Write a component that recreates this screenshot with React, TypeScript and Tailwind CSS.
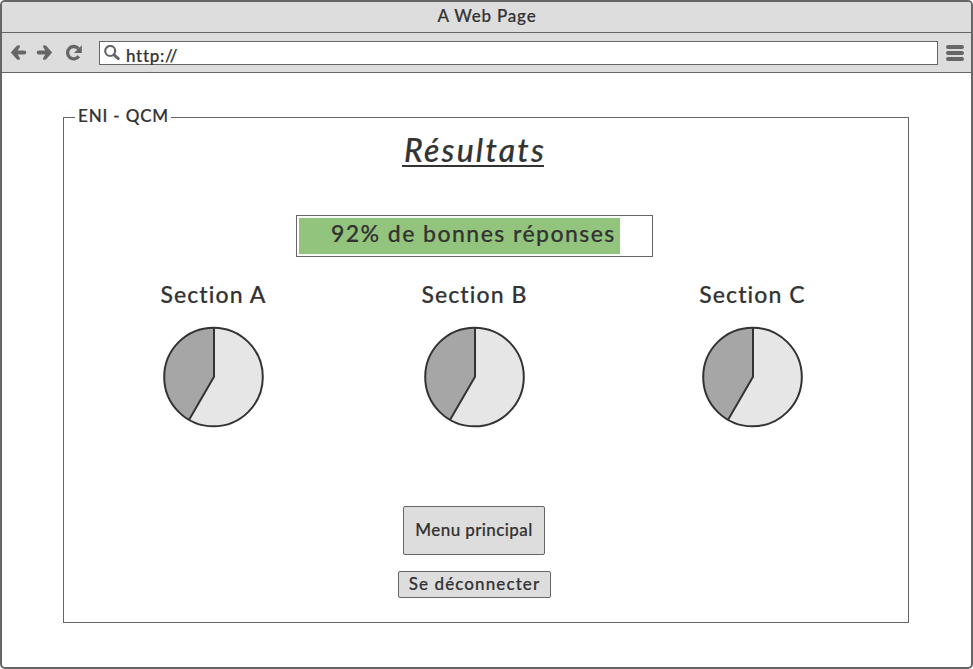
import React from "react";

function Pie() {
  return (
    <svg className="block" width="102" height="102" viewBox="0 0 102 102">
      <circle cx="51.5" cy="51" r="49.3" fill="#e6e6e6" />
      <path d="M51.5 51V1.7A49.3 49.3 0 0 0 27.1 93.8Z" fill="#a6a6a6" />
      <circle cx="51.5" cy="51" r="49.3" fill="none" stroke="#333" strokeWidth="2" />
      <path d="M52 1.7V50.8L27.1 93.8" fill="none" stroke="#333" strokeWidth="2" />
    </svg>
  );
}

function Section({ label, className }: { label: string; className: string }) {
  return (
    <section className={`flex w-[130px] flex-col items-center ${className}`}>
      <h2 className="h-[30px] whitespace-nowrap pl-[1px] text-[23px] leading-[28px] tracking-[1.1px]">{label}</h2>
      <div className="mt-[16px]"><Pie /></div>
    </section>
  );
}

function Arrow({ className = "" }: { className?: string }) {
  return (
    <svg className={className} width="17" height="17" viewBox="0 0 17 17">
      <path d="M.8 8.5L6.6 2Q7.7 .9 9.2 1.2Q10.3 1.6 9.9 3L7.7 6.4H14.2Q16.3 6.4 16.3 8.5Q16.3 10.6 14.2 10.6H7.7L9.9 14Q10.3 15.4 9.2 15.8Q7.7 16.1 6.6 15Z" fill="#666" />
    </svg>
  );
}

export default function App() {
  return (
    <div className="flex h-[669px] w-[973px] flex-col overflow-hidden rounded-[5px] border-2 border-[#666] bg-white font-['Lato',sans-serif] font-medium text-[#333] [-webkit-text-stroke:0.2px_#333]">
      <header className="h-[31px] border-b border-[#666] bg-[#ddd] pl-[1px] text-center text-[17px] leading-[27px] tracking-[0.8px]">
        A Web Page
      </header>
      <nav className="flex h-[40px] items-start border-b border-[#666] bg-[#ddd] pl-[8px] pt-[8px]">
        <Arrow className="mt-[3px]" />
        <Arrow className="ml-[9px] mt-[3px] rotate-180" />
        <svg className="ml-[12px] mt-[3px]" width="18" height="17" viewBox="0 0 18 17">
          <path d="M13.4 4.6A6.2 6.2 0 1 0 13.8 12.3" fill="none" stroke="#666" strokeWidth="3.3" />
          <path d="M16.8 1.3V8.9H9Z" fill="#666" />
        </svg>
        <div className="ml-[16px] flex h-[24px] w-[839px] border border-[#666] bg-white">
          <svg className="ml-[4px] mt-[3px]" width="17" height="17" viewBox="0 0 17 17" fill="none" stroke="#666">
            <circle cx="6.2" cy="6" r="5" strokeWidth="2.2" />
            <path d="M10 9.8L14.3 13.6" strokeWidth="3" strokeLinecap="round" />
          </svg>
          <span className="ml-[5px] text-[17px] leading-[27px] tracking-[0.7px]">http://</span>
        </div>
        <div className="ml-[8px] mt-[4px] flex flex-col gap-[2px]">
          <i className="h-[4px] w-[18px] rounded-[2px] bg-[#666]" />
          <i className="h-[4px] w-[18px] rounded-[2px] bg-[#666]" />
          <i className="h-[4px] w-[18px] rounded-[2px] bg-[#666]" />
        </div>
      </nav>
      <main className="pl-[61px] pt-[44px]">
        <div className="h-[506px] w-[846px] border border-[#666]">
          <div className="-mt-[14px] ml-[11px] h-[24px] w-[96px] whitespace-nowrap bg-white pl-[3px] text-[17px] leading-[24px] tracking-[0.85px]">ENI - QCM</div>
          <h1 className="ml-[338px] mt-[2px] h-[37px] w-[142px] whitespace-nowrap border-b-2 border-[#333] pl-[2px] text-[32px] italic leading-[40px] tracking-[2.2px]">Résultats</h1>
          <div className="ml-[232px] mt-[48px] h-[42px] w-[357px] border border-[#666] p-[2px]">
            <div className="h-[36px] w-[321px] whitespace-nowrap bg-[#93c47d] pl-[32px] text-[23px] leading-[31px] tracking-[1.45px]">92% de bonnes réponses</div>
          </div>
          <div className="mt-[23px] flex pl-[84px]">
            <Section label="Section A" className="" />
            <Section label="Section B" className="ml-[131px]" />
            <Section label="Section C" className="ml-[148px]" />
          </div>
          <button className="ml-[339px] mt-[78px] block h-[49px] w-[142px] whitespace-nowrap rounded-[2px] border border-[#666] bg-[#ddd] pb-[2px] text-[17px] leading-[24px] tracking-[0.4px]">Menu principal</button>
          <button className="ml-[334px] mt-[16px] block h-[27px] w-[153px] whitespace-nowrap rounded-[2px] border border-[#666] bg-[#ddd] pb-[2px] text-[17px] leading-[23px] tracking-[1.1px]">Se déconnecter</button>
        </div>
      </main>
    </div>
  );
}
